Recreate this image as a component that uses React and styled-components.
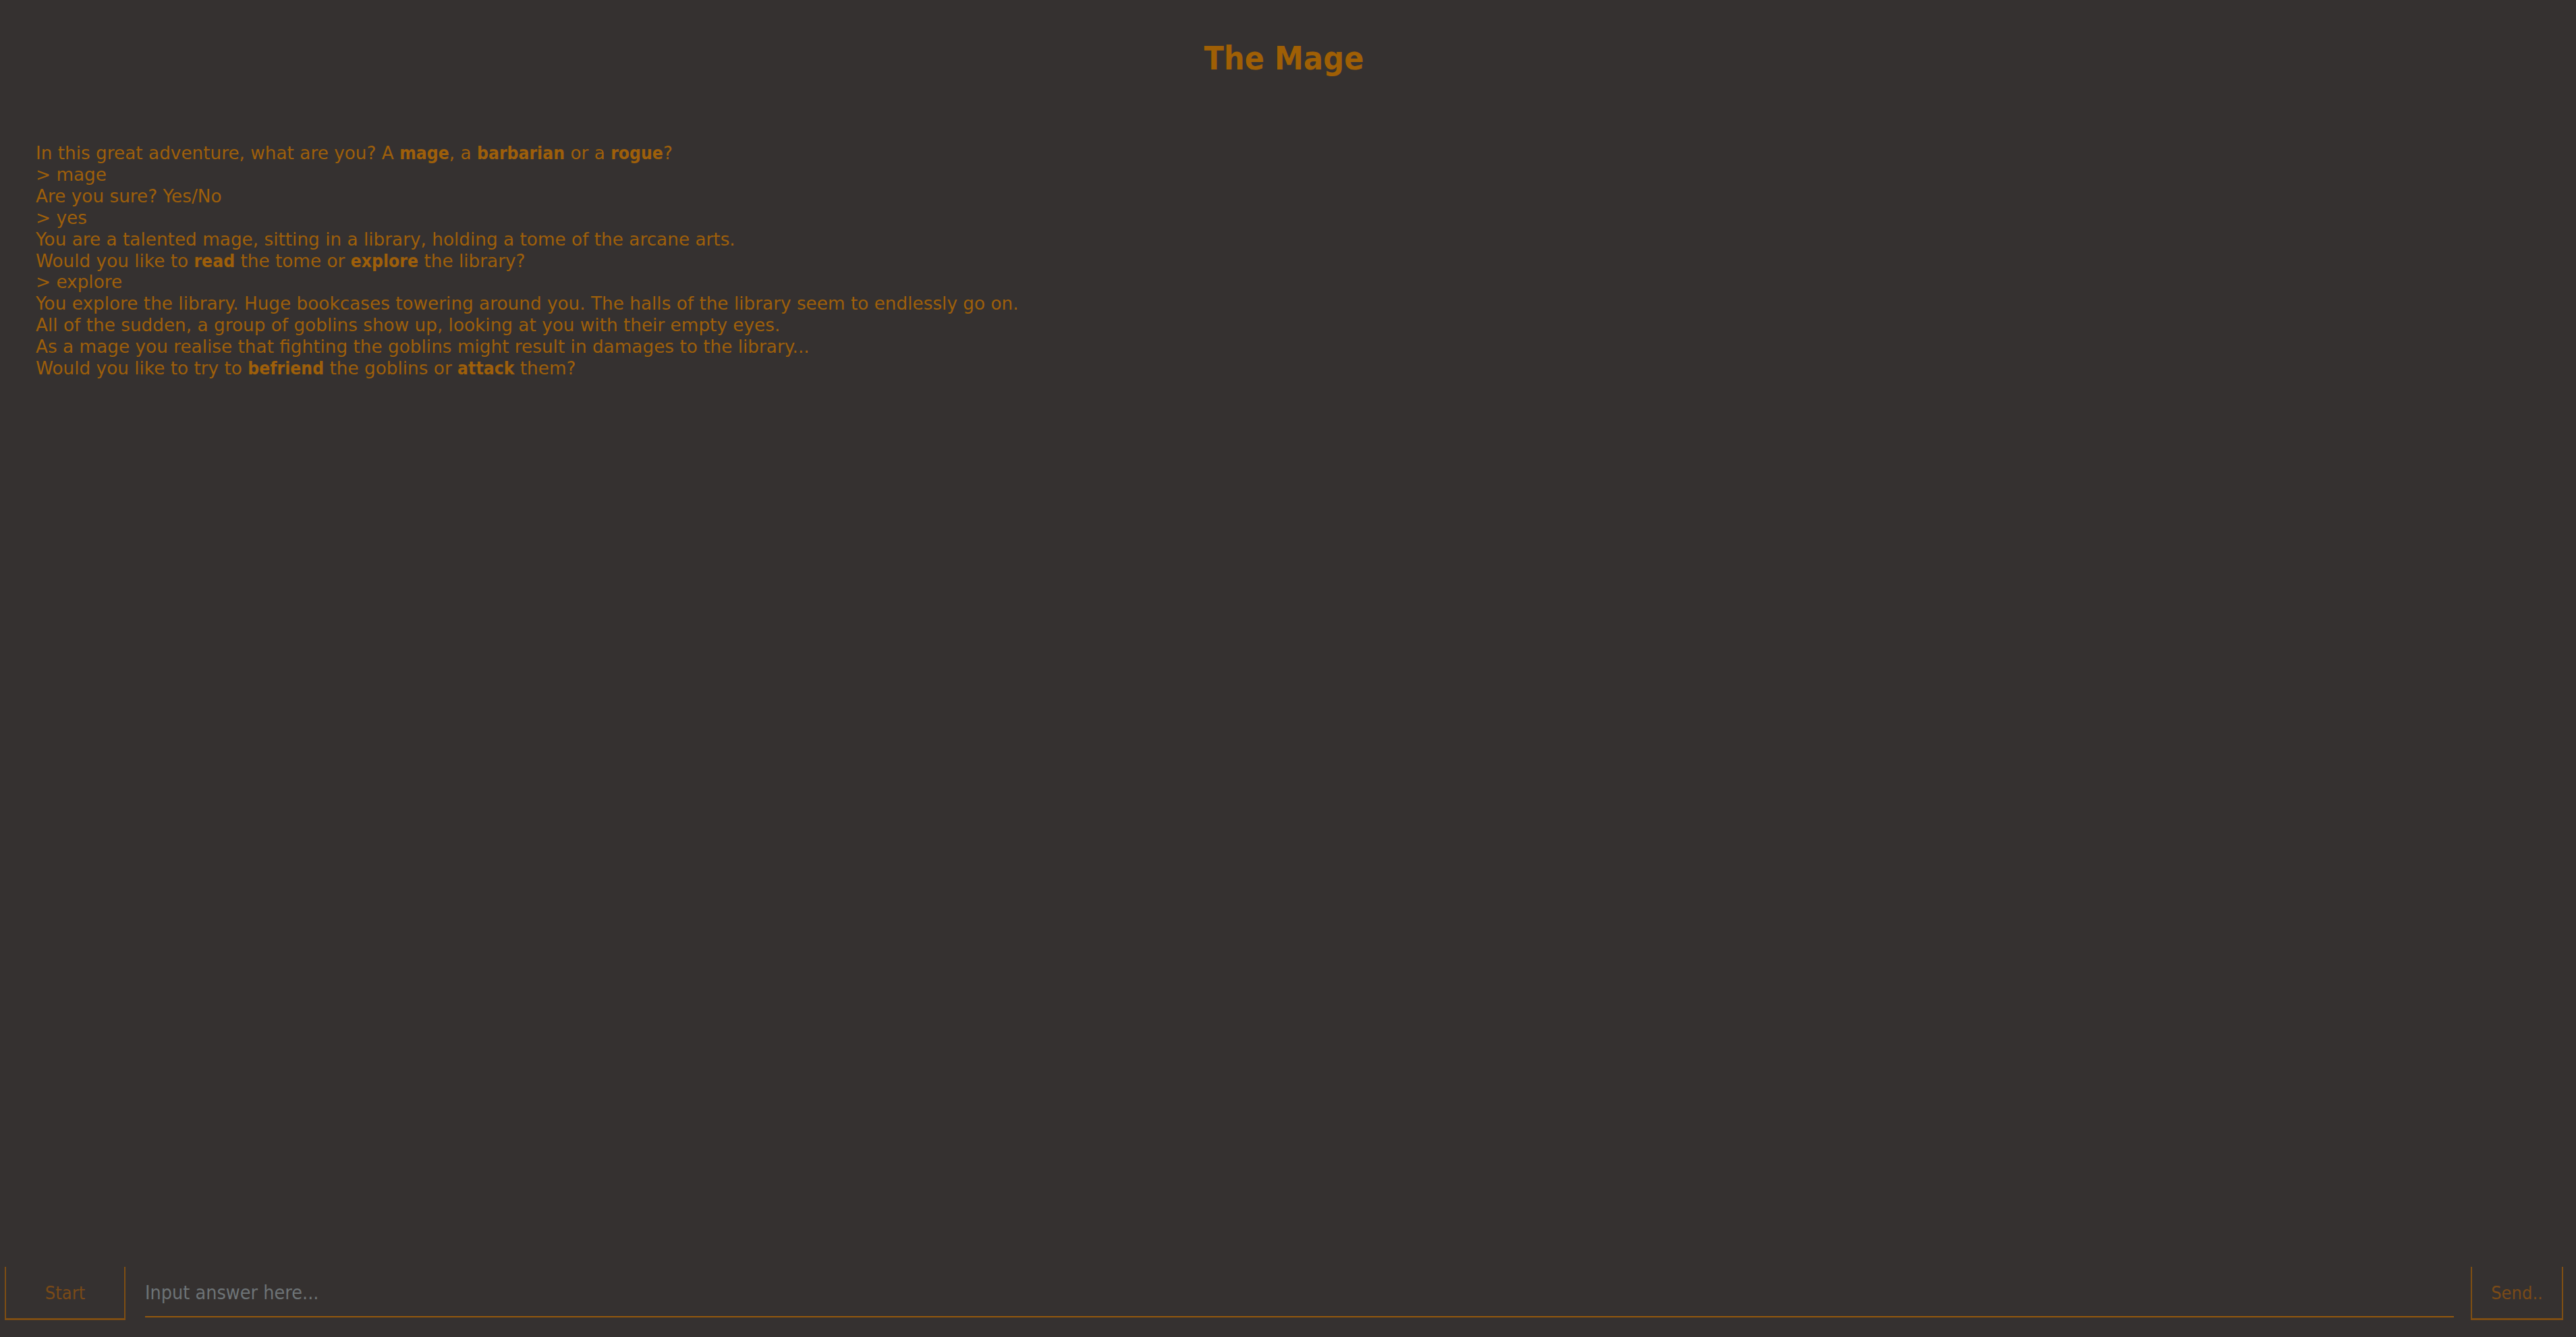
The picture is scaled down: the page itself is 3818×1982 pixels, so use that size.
import React from "react";
import styled, { createGlobalStyle } from "styled-components";

const GlobalStyle = createGlobalStyle`
  html, body {
    margin: 0;
    padding: 0;
    background: #353130;
  }
  #root {
    min-height: 100vh;
  }
  * { box-sizing: border-box; }
`;

const Page = styled.div`
  height: 100vh;
  display: flex;
  flex-direction: column;
  background: #353130;
  color: #9e5f0a;
  font-family: "DejaVu Sans", sans-serif;
`;

const Title = styled.h1`
  margin: 0;
  padding: 58px 12px 0 0;
  text-align: center;
  font-family: "DejaVu Sans Condensed", "DejaVu Sans", sans-serif;
  font-stretch: condensed;
  font-weight: bold;
  font-size: 48px;
  line-height: 56px;
  color: #9f5f05;
`;

const Log = styled.div`
  flex: 1;
  margin-top: 98px;
  padding-left: 53px;
  font-size: 26.3px;
  line-height: 31.9px;
  color: #9e5f0a;
`;

const Line = styled.div`
  white-space: pre;
`;

const B = styled.b`
  font-weight: bold;
  font-family: "DejaVu Sans Condensed", "DejaVu Sans", sans-serif;
  font-stretch: condensed;
`;

const Bar = styled.div`
  display: flex;
  align-items: flex-end;
  padding: 0 19px 25px 7px;
`;

const Button = styled.button`
  width: ${(p) => p.$w}px;
  height: 79px;
  flex: none;
  background: transparent;
  border: 2px solid #7e4e13;
  border-top: none;
  border-bottom-width: 3px;
  color: #7a4a17;
  font-family: "DejaVu Sans Condensed", "DejaVu Sans", sans-serif;
  font-stretch: condensed;
  font-size: 27px;
  padding: 0;
  cursor: pointer;
`;

const Input = styled.input`
  flex: 1;
  min-width: 0;
  height: 71px;
  margin: 0 25px 4px 29px;
  padding: 0;
  background: transparent;
  border: none;
  border-bottom: 2px solid #94580c;
  outline: none;
  color: #9e5f0a;
  font-family: "DejaVu Sans Condensed", "DejaVu Sans", sans-serif;
  font-stretch: condensed;
  font-size: 28.5px;
  &::placeholder {
    color: #6d7376;
  }
`;

export default function App() {
  return (
    <>
      <GlobalStyle />
      <Page>
        <Title>The Mage</Title>
        <Log>
          <Line>
            In this great adventure, what are you? A <B>mage</B>, a <B>barbarian</B> or a <B>rogue</B>?
          </Line>
          <Line>&gt; mage</Line>
          <Line>Are you sure? Yes/No</Line>
          <Line>&gt; yes</Line>
          <Line>You are a talented mage, sitting in a library, holding a tome of the arcane arts.</Line>
          <Line>
            Would you like to <B>read</B> the tome or <B>explore</B> the library?
          </Line>
          <Line>&gt; explore</Line>
          <Line>
            You explore the library. Huge bookcases towering around you. The halls of the library seem to endlessly go on.
          </Line>
          <Line>All of the sudden, a group of goblins show up, looking at you with their empty eyes.</Line>
          <Line>As a mage you realise that fighting the goblins might result in damages to the library...</Line>
          <Line>
            Would you like to try to <B>befriend</B> the goblins or <B>attack</B> them?
          </Line>
        </Log>
        <Bar>
          <Button $w={179}>Start</Button>
          <Input placeholder="Input answer here..." />
          <Button $w={137}>Send..</Button>
        </Bar>
      </Page>
    </>
  );
}
